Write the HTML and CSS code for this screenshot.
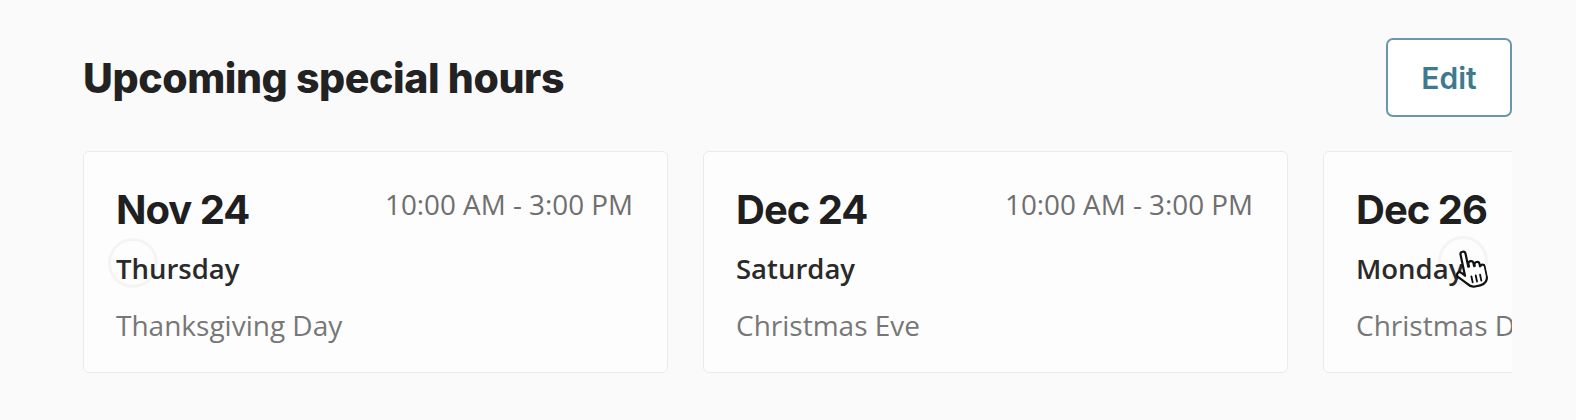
FILE: index.html
```html
<!DOCTYPE html>
<html lang="en">
<head>
    <meta charset="UTF-8">
    <meta name="viewport" content="width=device-width, initial-scale=1.0">
    <title>Special hours</title>
    <link rel="stylesheet" href="styles.css">
</head>
<body>
    <div class="page">
        <div class="header">
            <h2 class="title">Upcoming special hours</h2>
            <button class="edit-btn" type="button">Edit</button>
        </div>

        <div class="track">
            <div class="card">
                <div class="card-top">
                    <span class="date">Nov 24</span>
                    <span class="time">10:00 AM - 3:00 PM</span>
                </div>
                <div class="day">Thursday</div>
                <div class="desc">Thanksgiving Day</div>
                <span class="ripple ripple-left"></span>
            </div>

            <div class="card">
                <div class="card-top">
                    <span class="date">Dec 24</span>
                    <span class="time">10:00 AM - 3:00 PM</span>
                </div>
                <div class="day">Saturday</div>
                <div class="desc">Christmas Eve</div>
            </div>

            <div class="card">
                <div class="card-top">
                    <span class="date">Dec 26</span>
                    <span class="time">10:00 AM - 3:00 PM</span>
                </div>
                <div class="day">Monday</div>
                <div class="desc">Christmas Day (observed)</div>
                <!-- mouse pointer from the recording -->
                <span class="ripple ripple-hand"></span>
                <svg class="hand" width="34" height="42" viewBox="0 0 20 24">
                    <path d="M7 2.2a1.5 1.5 0 0 1 3 0V10h.4V8.6a1.5 1.5 0 0 1 3 0V10.4h.4V9.8a1.5 1.5 0 0 1 3 0v1.4h.2a1.4 1.4 0 0 1 2.6.7V17c0 3-2 5.2-5 5.2h-3.2c-2 0-3.1-1-4-2.4L2.8 14.6c-.6-.9-.3-1.9.4-2.3.7-.4 1.6-.2 2.1.5L7 14.8Z" fill="#fff" stroke="#111" stroke-width="1.3" stroke-linejoin="round"/>
                    <path d="M10.6 16v3.6M13.2 16v3.6M15.8 16v3.6" stroke="#111" stroke-width="1.1" stroke-linecap="round"/>
                </svg>
            </div>
        </div>
    </div>
</body>
</html>
```

FILE: styles.css
```css
* {
    box-sizing: border-box;
}

body {
    margin: 0;
    background-color: #fafafa;
    font-family: "Open Sans", "Liberation Sans", sans-serif;
}

.page {
    padding: 38px 64px 0 83px;
}

.header {
    display: flex;
    justify-content: space-between;
    align-items: center;
}

.title {
    margin: 0;
    font-family: Inter, "DejaVu Sans", sans-serif;
    font-weight: 800;
    font-size: 41px;
    line-height: 50px;
    letter-spacing: -0.4px;
    color: #222;
}

.edit-btn {
    width: 126px;
    height: 79px;
    background-color: #fff;
    border: 2px solid #6b98a9;
    border-radius: 7px;
    color: #3e7a8e;
    font-family: Inter, "Open Sans", sans-serif;
    font-weight: 600;
    font-size: 30px;
    cursor: pointer;
}

.track {
    display: flex;
    gap: 35px;
    margin-top: 34px;
    overflow: hidden;
}

.card {
    position: relative;
    flex: 0 0 585px;
    height: 222px;
    padding: 34px 34px 0 32px;
    background-color: #fdfdfd;
    border: 1.5px solid #ebebeb;
    border-radius: 6px;
}

.card-top {
    display: flex;
    justify-content: space-between;
    align-items: flex-start;
}

.date {
    font-family: Inter, "Liberation Sans", sans-serif;
    font-weight: 700;
    font-size: 40px;
    line-height: 48px;
    letter-spacing: -1px;
    color: #1f1f1f;
}

.time {
    font-size: 27.8px;
    line-height: 36px;
    color: #6f6f6f;
}

.day {
    margin-top: 17px;
    font-size: 27.5px;
    font-weight: 600;
    line-height: 36px;
    color: #2a2a2a;
}

.desc {
    margin-top: 20px;
    font-size: 28px;
    line-height: 36px;
    color: #777;
    white-space: nowrap;
}

.ripple {
    position: absolute;
    width: 50px;
    height: 50px;
    border-radius: 50%;
    border: 3px solid rgba(0, 0, 0, 0.035);
}

.ripple-left {
    left: 24px;
    top: 86px;
}

.ripple-hand {
    left: 114px;
    top: 84px;
}

.hand {
    position: absolute;
    left: 128px;
    top: 97px;
    transform: rotate(-12deg);
}
```
